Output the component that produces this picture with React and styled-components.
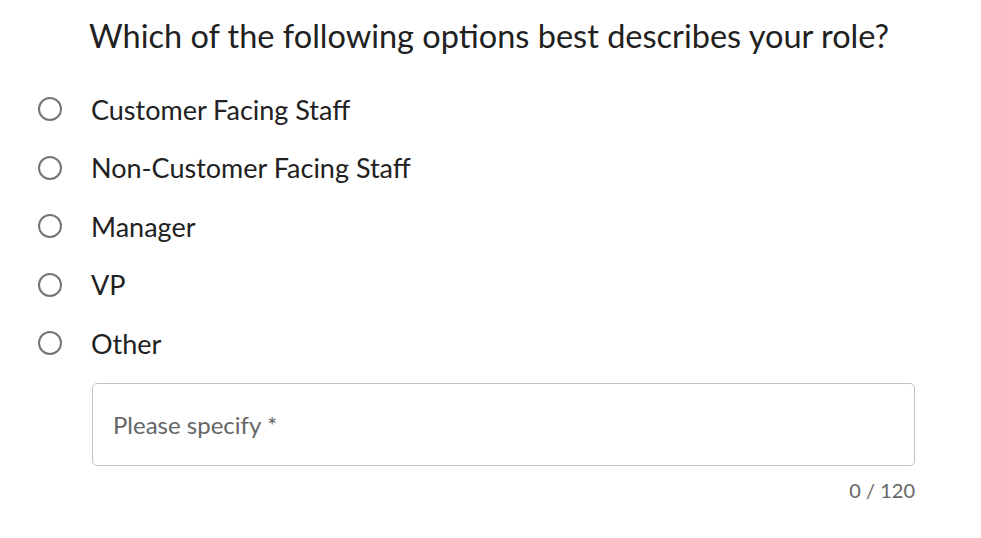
import React from "react";
import styled, { createGlobalStyle } from "styled-components";

const Global = createGlobalStyle`
  html, body { margin: 0; padding: 0; background: #fff; }
  body { font-family: Lato, "Noto Sans", sans-serif; }
`;

const Page = styled.div`
  width: 981px;
  height: 538px;
  box-sizing: border-box;
  padding: 16px 66px 0 38px;
`;

const Title = styled.h1`
  margin: 0 0 0 51px;
  font-size: 32.5px;
  font-weight: 400;
  color: #212121;
  line-height: 40px;
`;

const Options = styled.div`
  display: flex;
  flex-direction: column;
  margin-top: 24px;
`;

const Option = styled.label`
  display: flex;
  align-items: center;
  height: 58.5px;
  gap: 29px;
  cursor: pointer;
`;

const Radio = styled.span`
  width: 20px;
  height: 20px;
  border: 2.5px solid #757575;
  border-radius: 50%;
  flex: none;
`;

const OptionText = styled.span`
  font-size: 27px;
  color: #212121;
`;

const Field = styled.div`
  margin: 10px 0 0 54px;
  height: 83px;
  border: 1px solid #c4c4c4;
  border-radius: 5px;
  box-sizing: border-box;
  display: flex;
  align-items: center;
  padding: 0 20px;
`;

const Placeholder = styled.span`
  font-size: 24px;
  color: #666;
`;

const Counter = styled.div`
  margin-left: 54px;
  text-align: right;
  font-size: 20px;
  color: #666;
  margin-top: 12px;
`;

const options = [
  "Customer Facing Staff",
  "Non-Customer Facing Staff",
  "Manager",
  "VP",
  "Other",
];

export default function App() {
  return (
    <Page>
      <Global />
      <Title>Which of the following options best describes your role?</Title>
      <Options>
        {options.map((o) => (
          <Option key={o}>
            <Radio />
            <OptionText>{o}</OptionText>
          </Option>
        ))}
      </Options>
      <Field>
        <Placeholder>Please specify *</Placeholder>
      </Field>
      <Counter>0 / 120</Counter>
    </Page>
  );
}
